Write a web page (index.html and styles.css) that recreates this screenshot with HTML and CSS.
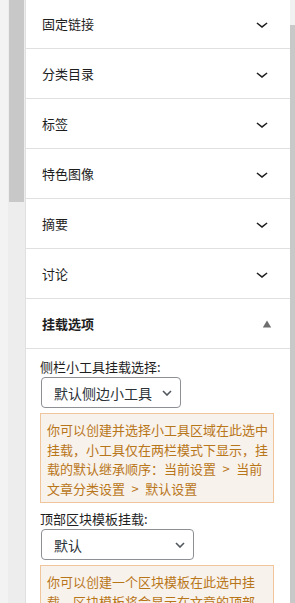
FILE: index.html
```html
<!DOCTYPE html>
<html lang="zh-CN">

<head>
    <meta charset="UTF-8">
    <meta name="viewport" content="width=device-width, initial-scale=1.0">
    <title>文章设置</title>
    <link rel="stylesheet" href="styles.css">
</head>

<body>
    <div class="frame">
        <div class="gutter"></div>
        <div class="rail">
            <div class="rail-thumb"></div>
        </div>

        <div class="sidebar">
            <div class="panel">
                <span class="panel-title">固定链接</span>
                <svg class="chevron" viewBox="0 0 24 24" width="24" height="24"><path d="M17.5 11.6L12 16l-5.5-4.4.9-1.2L12 14l4.6-3.6 1 1.2z"/></svg>
            </div>
            <div class="panel">
                <span class="panel-title">分类目录</span>
                <svg class="chevron" viewBox="0 0 24 24" width="24" height="24"><path d="M17.5 11.6L12 16l-5.5-4.4.9-1.2L12 14l4.6-3.6 1 1.2z"/></svg>
            </div>
            <div class="panel">
                <span class="panel-title">标签</span>
                <svg class="chevron" viewBox="0 0 24 24" width="24" height="24"><path d="M17.5 11.6L12 16l-5.5-4.4.9-1.2L12 14l4.6-3.6 1 1.2z"/></svg>
            </div>
            <div class="panel">
                <span class="panel-title">特色图像</span>
                <svg class="chevron" viewBox="0 0 24 24" width="24" height="24"><path d="M17.5 11.6L12 16l-5.5-4.4.9-1.2L12 14l4.6-3.6 1 1.2z"/></svg>
            </div>
            <div class="panel">
                <span class="panel-title">摘要</span>
                <svg class="chevron" viewBox="0 0 24 24" width="24" height="24"><path d="M17.5 11.6L12 16l-5.5-4.4.9-1.2L12 14l4.6-3.6 1 1.2z"/></svg>
            </div>
            <div class="panel">
                <span class="panel-title">讨论</span>
                <svg class="chevron" viewBox="0 0 24 24" width="24" height="24"><path d="M17.5 11.6L12 16l-5.5-4.4.9-1.2L12 14l4.6-3.6 1 1.2z"/></svg>
            </div>
            <div class="panel panel-open">
                <span class="panel-title">挂载选项</span>
                <svg class="arrow-up" viewBox="0 0 10 8" width="10" height="8"><path d="M5 0.5L9.2 7.5H0.8z"/></svg>
            </div>

            <div class="panel-body">
                <div class="field">
                    <label class="field-label">侧栏小工具挂载选择:</label>
                    <div class="select select-sidebar">
                        <span>默认侧边小工具</span>
                        <svg viewBox="0 0 10 6" width="10" height="6"><path d="M1 1l4 4 4-4"/></svg>
                    </div>
                    <div class="notice">你可以创建并选择小工具区域在此选中挂载，小工具仅在两栏模式下显示，挂载的默认继承顺序：当前设置&ensp;&gt;&ensp;当前文章分类设置&ensp;&gt;&ensp;默认设置</div>
                </div>

                <div class="field">
                    <label class="field-label">顶部区块模板挂载:</label>
                    <div class="select select-top">
                        <span>默认</span>
                        <svg viewBox="0 0 10 6" width="10" height="6"><path d="M1 1l4 4 4-4"/></svg>
                    </div>
                    <div class="notice">你可以创建一个区块模板在此选中挂载，区块模板将会显示在文章的顶部</div>
                </div>
            </div>
        </div>

        <div class="scrollbar">
            <div class="scrollbar-thumb"></div>
        </div>
    </div>
</body>

</html>
```

FILE: styles.css
```css
body {
    margin: 0;
    font-family: "Noto Sans CJK SC", "Noto Sans", sans-serif;
    color: #1e1e1e;
    background: #f3f3f3;
    overflow: hidden;
}

.frame {
    display: flex;
    height: 603px;
}

.gutter {
    width: 8px;
    background: #f3f3f3;
}

.rail {
    width: 17px;
    background: #ededed;
    padding: 0 1px;
    box-sizing: border-box;
}

.rail-thumb {
    height: 202px;
    background: #c8c8c8;
}

.sidebar {
    flex: 1;
    background: #fff;
    border-left: 1px solid #e0e0e0;
    margin-top: -1px;
}

.panel {
    display: flex;
    align-items: center;
    justify-content: space-between;
    height: 49px;
    padding: 0 17px 0 16px;
    border-bottom: 1px solid #e0e0e0;
}

.panel-title {
    font-size: 13px;
    line-height: 18px;
}

.panel-open .panel-title {
    font-weight: bold;
}

.chevron {
    fill: #1e1e1e;
    margin-right: -1px;
}

.arrow-up {
    fill: #6e6e6e;
    margin-right: 1px;
}

.panel-body {
    padding: 9px 16px 0 14px;
}

.field + .field {
    margin-top: 7px;
}

.field-label {
    display: block;
    font-size: 13px;
    line-height: 18px;
}

.select {
    display: flex;
    align-items: center;
    justify-content: space-between;
    box-sizing: border-box;
    height: 31px;
    margin: 1px 0 0 1px;
    padding: 0 8px 0 12px;
    border: 1px solid #8c8f94;
    border-radius: 4px;
    font-size: 14px;
    color: #2c3338;
}

.select svg {
    fill: none;
    stroke: #50575e;
    stroke-width: 1.6;
}

.select-sidebar {
    width: 140px;
}

.select-top {
    width: 153px;
}

.notice {
    margin-top: 5px;
    padding: 6px 4px 4px 6px;
    border: 1px solid #f0c59b;
    background: #f8f2ec;
    color: #b8761a;
    font-size: 13px;
    line-height: 19.5px;
}

.scrollbar {
    width: 5px;
    background: #c8c8c8;
}

.scrollbar-thumb {
    height: 25px;
    background: #f1f1f1;
}
```
